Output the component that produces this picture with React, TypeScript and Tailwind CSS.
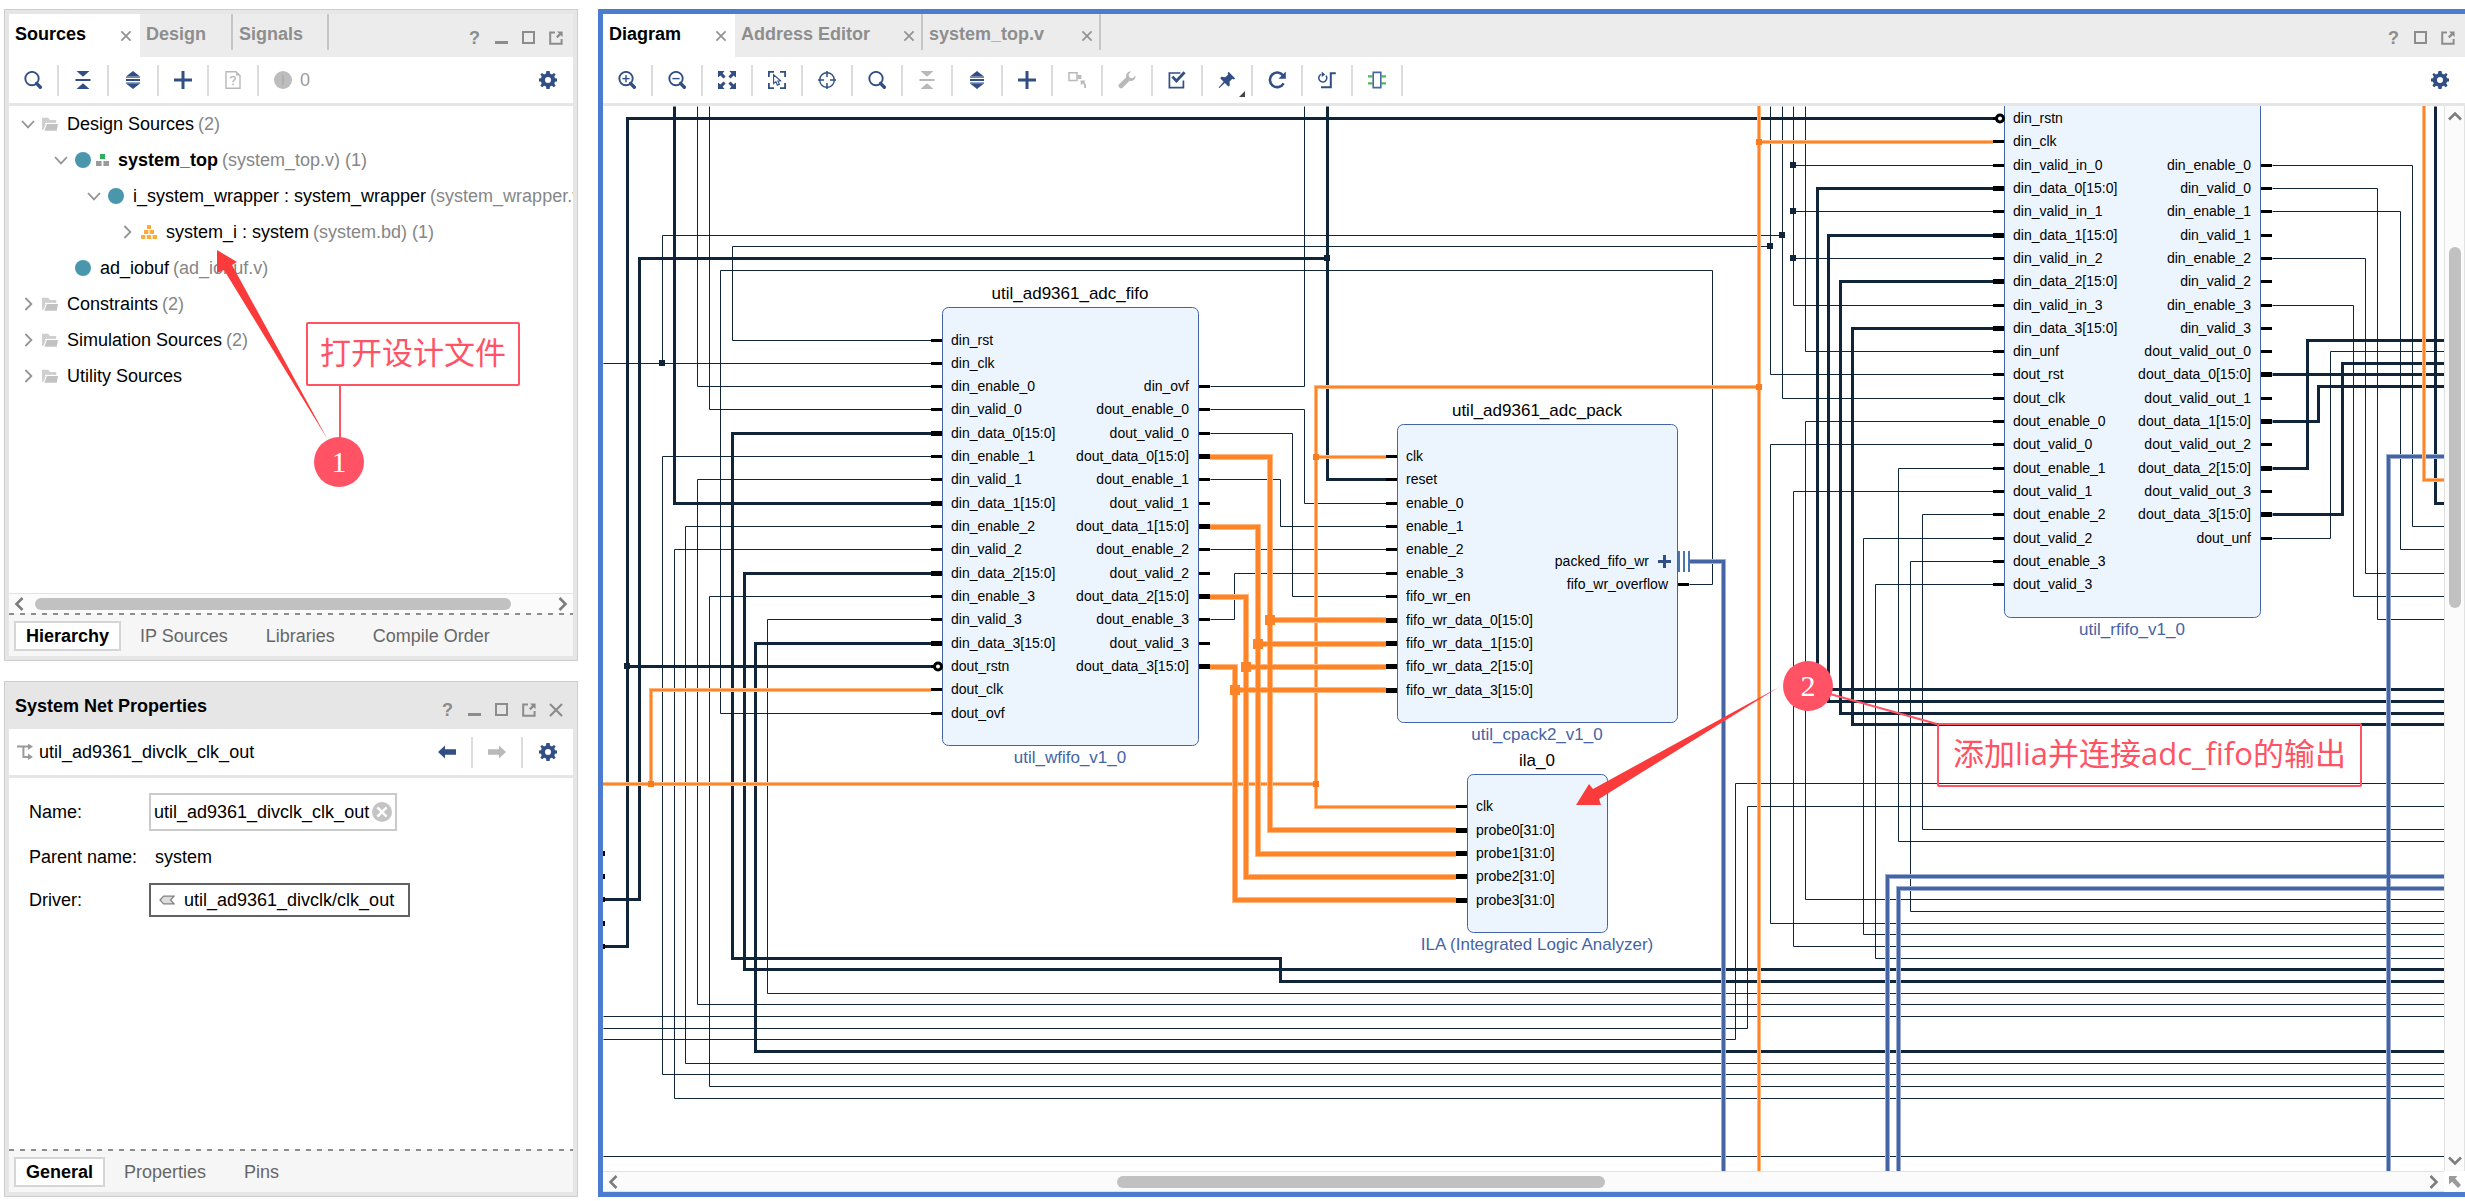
import React from "react"
import clsx from "clsx"

const NAVY = "#324f85"
const WIRE = "#10243a"
const GREY = "#b9b9b9"

/* ---------- icons ---------- */

type IconProps = { children: React.ReactNode; size?: number }

const Icon = ({ children, size = 18 }: IconProps) => (
  <svg width={size} height={size} viewBox="0 0 18 18" fill="none" className="shrink-0" aria-hidden="true">
    {children}
  </svg>
)

const Lens = ({ sign }: { sign?: "plus" | "minus" }) => (
  <Icon>
    <circle cx="8" cy="7.6" r="6.7" stroke={NAVY} strokeWidth="1.9" />
    <path d="M12.6 12.4 L16.3 16.2" stroke={NAVY} strokeWidth="3.4" strokeLinecap="round" />
    {sign && <path d="M4.4 7.6H11.6" stroke={NAVY} strokeWidth="1.4" />}
    {sign === "plus" && <path d="M8 4V11.2" stroke={NAVY} strokeWidth="1.4" />}
  </Icon>
)

const Collapse = ({ color = NAVY }: { color?: string }) => (
  <Icon>
    <path d="M2.5 0H15.5L9 5.8ZM2.5 18H15.5L9 12.2Z" fill={color} />
    <path d="M1.5 9H16.5" stroke={color} strokeWidth="2" />
  </Icon>
)

const Expand = () => (
  <Icon>
    <path d="M2 5.6L9 0L16 5.6ZM2 12.6L9 18L16 12.6Z" fill={NAVY} />
    <path d="M2 9H16" stroke={NAVY} strokeWidth="2" />
    <path d="M2 6.2H16M2 12H16" stroke={NAVY} strokeWidth="1" />
  </Icon>
)

const Plus = () => (
  <Icon>
    <path d="M0 9H18M9 0V18" stroke={NAVY} strokeWidth="3" />
  </Icon>
)

const HelpDoc = () => (
  <Icon>
    <path d="M2 .8H12L16 4.6V17.2H2Z" stroke={GREY} strokeWidth="1.4" />
    <path d="M12 .8V4.6H16Z" fill={GREY} />
    <path d="M6.6 7.4C6.6 5 11.2 5 11.2 7.5C11.2 9.2 9 9.2 9 11.2M9 12.6V14.2" stroke={GREY} strokeWidth="1.5" />
  </Icon>
)

const Gear = () => (
  <Icon>
    <path
      fillRule="evenodd"
      fill={NAVY}
      d="M7.4 0H10.6L11 2.6L13 3.4L15 2L16.6 3.6L15.3 5.6L16 7.2L18 7.6V10.4L16 10.8L15.3 12.4L16.6 14.4L14.9 16.2L12.8 14.8L11 15.5L10.6 18H7.4L7 15.5L5.2 14.8L3.1 16.2L1.4 14.4L2.7 12.4L2 10.8L0 10.4V7.6L2 7.2L2.7 5.6L1.4 3.6L3 2L5 3.4L7 2.6ZM9 6A3 3 0 1 0 9 12A3 3 0 1 0 9 6Z"
    />
  </Icon>
)

const FitAll = () => (
  <Icon>
    <path d="M0 0H6.6L4.6 2.2L7.6 5.4L5.4 7.4L2.4 4.4L0 6.6ZM18 0V6.6L15.6 4.4L12.6 7.4L10.4 5.4L13.4 2.2L11.4 0ZM0 18V11.4L2.4 13.6L5.4 10.6L7.6 12.6L4.6 15.8L6.6 18ZM18 18H11.4L13.4 15.8L10.4 12.6L12.6 10.6L15.6 13.6L18 11.4Z" fill={NAVY} />
  </Icon>
)

const SelectArea = () => (
  <Icon>
    <path d="M.9 6V.9H6M12 .9H17.1V6M17.1 12V17.1H12M6 17.1H.9V12" stroke={NAVY} strokeWidth="1.8" />
    <path d="M5.6 3.8V12.6L7.9 10.7L9.4 14.2L11.4 13.2L9.9 10L12.6 9.8Z" stroke={NAVY} strokeWidth="1.1" />
  </Icon>
)

const Target = () => (
  <Icon>
    <circle cx="9" cy="9" r="7.3" stroke={NAVY} strokeWidth="1.4" />
    <path d="M9 0V6M9 12V18M0 9H6M12 9H18" stroke={NAVY} strokeWidth="1.5" />
  </Icon>
)

const Ungroup = () => (
  <Icon>
    <path d="M1 1.8H9V9.4H1Z" stroke={GREY} strokeWidth="1.5" />
    <path d="M9.6 4H13.4V8H9.6Z" fill={GREY} />
    <path d="M12.4 9.4H17.6L16.2 11L18 14V17H16.2V14L14.8 12.6L13 14Z" fill={GREY} />
  </Icon>
)

const Wrench = () => (
  <Icon>
    <path d="M13 .6C10 .2 7.4 2.8 8.2 6.2L.8 13.4C-.8 15.4 2.4 18.6 4.4 17L11.6 9.8C15 10.6 18 8 17.4 4.6L14.6 7.2L11.4 6.4L10.6 3.4Z" fill={GREY} />
  </Icon>
)

const Validate = () => (
  <Icon>
    <path d="M12.4 2H1.4V16.6H15.4V9.4" stroke={NAVY} strokeWidth="1.7" />
    <path d="M4.4 5.6L8.4 10L16.6 1.2" stroke={NAVY} strokeWidth="2.8" />
  </Icon>
)

const Pin = () => (
  <Icon>
    <path d="M10.6 .8L17.2 7.4L15.6 8.4L14.4 7.8L11.6 10.6L11.8 14.4L10.4 15.6L6.8 12L1.4 17L.6 16.4L5.6 10.8L2.2 7.2L3.4 5.8L7.2 6.2L10.2 3.4L9.6 2.2Z" fill={NAVY} />
  </Icon>
)

const Refresh = () => (
  <Icon>
    <path d="M15 4.4A7.3 7.3 0 1 0 15.6 12.4" stroke={NAVY} strokeWidth="2.6" />
    <path d="M17.8 .6V7.8H10.4Z" fill={NAVY} />
  </Icon>
)

const Regenerate = () => (
  <Icon>
    <path d="M3 3.4A4 4 0 1 0 8 4.6" stroke={NAVY} strokeWidth="1.5" />
    <path d="M3.6 .6L7.2 3.4L3.8 6Z" fill={NAVY} />
    <path d="M17.8 2.2H12.8V16.2H3" stroke={NAVY} strokeWidth="2" />
  </Icon>
)

const Chip = () => (
  <Icon>
    <path d="M0 5.4H4.6M0 12.4H4.6M13.4 5.4H18M13.4 12.4H18" stroke="#4cbb57" strokeWidth="2.4" />
    <path d="M5.2 1.4H12.8V16.6H5.2Z" stroke="#4a669c" strokeWidth="1.6" />
  </Icon>
)

const Arrow = ({ dir, color }: { dir: "left" | "right"; color: string }) => (
  <Icon>
    <path
      d={dir === "left" ? "M0 9L7 2.6V6.2H18V11.8H7V15.4Z" : "M18 9L11 2.6V6.2H0V11.8H11V15.4Z"}
      fill={color}
    />
  </Icon>
)

const Folder = () => (
  <Icon size={16}>
    <path d="M0 2H7L9 4.4H16V8H5L1.6 15.6H0Z" fill="#cfcfcf" />
    <path d="M5.6 9H18L16.6 16.6H2.6Z" fill="#c2c2c2" />
    <path d="M3.4 8.4H14" stroke="#fff" strokeWidth="1.2" />
  </Icon>
)

const Dot = () => <span className="size-4 shrink-0 rounded-full bg-[#4a97ad]" />

const TopMark = () => (
  <svg width="13" height="12" viewBox="0 0 13 12" className="shrink-0" aria-hidden="true">
    <path d="M4 0H9V5H4Z" fill="#2fae5b" />
    <path d="M0 7H5.6V12H0ZM7.4 7H13V12H7.4Z" fill="#9a9a9a" />
  </svg>
)

const BlockDesign = () => (
  <svg width="16" height="14" viewBox="0 0 16 14" className="shrink-0" aria-hidden="true">
    <path d="M6 0H10V4H6ZM3 5H7.4V9H3ZM8.6 5H13V9H8.6ZM0 10H4.4V14H0ZM5.8 10H10.2V14H5.8ZM11.6 10H16V14H11.6Z" fill="#fbac3d" />
  </svg>
)

const Chevron = ({ open }: { open?: boolean }) => (
  <svg width="14" height="14" viewBox="0 0 14 14" fill="none" className="shrink-0" aria-hidden="true">
    <path d={open ? "M1 4L7 10.4L13 4" : "M4.4 1L10.4 7L4.4 13"} stroke="#949494" strokeWidth="1.8" />
  </svg>
)

const ScrollMark = ({ dir }: { dir: "left" | "right" | "up" | "down" }) => {
  const paths = {
    left: "M9.5 1L3.5 7L9.5 13",
    right: "M4.5 1L10.5 7L4.5 13",
    up: "M1 9.5L7 3.5L13 9.5",
    down: "M1 4.5L7 10.5L13 4.5",
  }
  return (
    <svg width="14" height="14" viewBox="0 0 14 14" fill="none" className="shrink-0" aria-hidden="true">
      <path d={paths[dir]} stroke="#7d7d7d" strokeWidth="2.6" />
    </svg>
  )
}

/* ---------- panel chrome ---------- */

type WindowAction = "help" | "min" | "max" | "float" | "close"

const WindowButtons = ({ actions }: { actions: WindowAction[] }) => (
  <div className="ml-auto flex items-center pr-1 pt-1">
    {actions.map((action) => (
      <button key={action} aria-label={action} className="flex h-5 w-[27px] items-center justify-center text-[#8c8c8c]">
        {action === "help" && <span className="text-lg leading-5 font-bold">?</span>}
        {action === "min" && <span className="mt-2.5 h-[3px] w-[13px] bg-[#8c8c8c]" />}
        {action === "max" && <span className="size-[13px] border-2 border-[#8c8c8c]" />}
        {action === "float" && (
          <svg width="14" height="14" viewBox="0 0 14 14" fill="none" aria-hidden="true">
            <path d="M6 1.4H1.2V12.8H12.6V8" stroke="#8c8c8c" strokeWidth="2" />
            <path d="M8 .4H13.6V6L11.6 4.2L8.6 7.2L7 5.6L10 2.6Z" fill="#8c8c8c" />
          </svg>
        )}
        {action === "close" && (
          <svg width="14" height="14" viewBox="0 0 14 14" fill="none" aria-hidden="true">
            <path d="M1 1L13 13M13 1L1 13" stroke="#8c8c8c" strokeWidth="2.2" />
          </svg>
        )}
      </button>
    ))}
  </div>
)

type TabProps = { label: string; width: string; active?: boolean; closable?: boolean }

const Tab = ({ label, width, active, closable }: TabProps) => (
  <div className={clsx("flex h-full items-center pl-1.5", width, active ? "bg-white" : "bg-[#ececec]")}>
    <button className={clsx("pb-1 text-lg leading-6 font-bold", active ? "text-black" : "text-[#8e8e8e]")}>{label}</button>
    {closable && (
      <button aria-label={`Close ${label}`} className={clsx("ml-auto", active ? "mr-2" : "mr-1.5")}>
        <svg width="12" height="12" viewBox="0 0 12 12" fill="none" aria-hidden="true">
          <path d="M1.4 1.4L10.6 10.6M10.6 1.4L1.4 10.6" stroke="#929292" strokeWidth="1.7" />
        </svg>
      </button>
    )}
    {!active && <span className={clsx("h-9 w-0.5 self-start bg-[#c6c6c6]", !closable && "ml-auto")} />}
  </div>
)

type Tool = { name: string; icon: React.ReactNode; menu?: boolean }

const ToolButton = ({ name, icon, menu, last }: Tool & { last?: boolean }) => (
  <button
    aria-label={name}
    className={clsx("relative flex h-[31px] w-[50px] items-center justify-center", !last && "border-r-2 border-[#dcdcdc]")}
  >
    {icon}
    {menu && (
      <svg width="6" height="6" viewBox="0 0 6 6" className="absolute right-1.5 -bottom-px" aria-hidden="true">
        <path d="M6 0V6H0Z" fill="#444" />
      </svg>
    )}
  </button>
)

const FooterTabs = ({ tabs }: { tabs: string[] }) => (
  <div className="shrink-0 bg-[#f6f6f6]">
    <div className="h-0.5 bg-[repeating-linear-gradient(90deg,#8d8d8d_0_5px,transparent_5px_11px)]" />
    <div className="flex h-[41px] items-center pl-[5px]">
      {tabs.map((tab, i) => (
        <button
          key={tab}
          className={clsx(
            "text-lg leading-6",
            i === 0 ? "border-2 border-[#d6d6d6] bg-white px-2.5 py-px font-bold text-black" : "px-[19px] text-[#666]"
          )}
        >
          {tab}
        </button>
      ))}
    </div>
  </div>
)

/* ---------- left column ---------- */

type TreeRow = {
  pad: string
  open?: boolean
  leaf?: boolean
  icons: React.ReactNode
  label: string
  bold?: boolean
  note?: string
}

const tree: TreeRow[] = [
  { pad: "pl-3", open: true, icons: <Folder />, label: "Design Sources", note: "(2)" },
  { pad: "pl-[45px]", open: true, icons: <><Dot /><TopMark /></>, label: "system_top", bold: true, note: "(system_top.v) (1)" },
  { pad: "pl-[78px]", open: true, icons: <Dot />, label: "i_system_wrapper : system_wrapper", note: "(system_wrapper.v" },
  { pad: "pl-[111px]", icons: <BlockDesign />, label: "system_i : system", note: "(system.bd) (1)" },
  { pad: "pl-[45px]", leaf: true, icons: <Dot />, label: "ad_iobuf", note: "(ad_iobuf.v)" },
  { pad: "pl-3", icons: <Folder />, label: "Constraints", note: "(2)" },
  { pad: "pl-3", icons: <Folder />, label: "Simulation Sources", note: "(2)" },
  { pad: "pl-3", icons: <Folder />, label: "Utility Sources" },
]

const SourcesPanel = () => (
  <section className="flex h-[652px] flex-col overflow-hidden border border-[#cdcdcd] bg-[#e6e6e6] p-1">
    <div className="flex h-[43px] shrink-0 bg-[#ececec]">
      <Tab label="Sources" width="w-[131px]" active closable />
      <Tab label="Design" width="w-[93px]" />
      <Tab label="Signals" width="w-24" />
      <WindowButtons actions={["help", "min", "max", "float"]} />
    </div>
    <div className="flex h-[49px] shrink-0 items-center border-b-[3px] border-[#e6e6e6] bg-white">
      <ToolButton name="Search" icon={<Lens />} />
      <ToolButton name="Collapse all" icon={<Collapse />} />
      <ToolButton name="Expand all" icon={<Expand />} />
      <ToolButton name="Add sources" icon={<Plus />} />
      <ToolButton name="Show missing" icon={<HelpDoc />} />
      <button className="flex items-center gap-2 pl-[15px] text-lg leading-6 text-[#9b9b9b]">
        <span className="flex size-[18px] items-center justify-center rounded-full bg-[#bdbdbd]">
          <span className="h-2.5 w-0.5 bg-[#b0b0b0]" />
        </span>
        0
      </button>
      <div className="ml-auto">
        <ToolButton name="Settings" icon={<Gear />} last />
      </div>
    </div>
    <ul className="min-h-0 flex-1 overflow-hidden bg-white">
      {tree.map((row) => (
        <li key={row.label} className={clsx("flex h-9 items-center whitespace-nowrap text-lg leading-6", row.pad)}>
          {row.leaf ? <span className="w-3.5 shrink-0" /> : <Chevron open={row.open} />}
          <span className="ml-[7px] flex items-center gap-[5px]">{row.icons}</span>
          <span className={clsx("ml-[9px]", row.bold && "font-bold")}>{row.label}</span>
          {row.note && <span className="ml-1 text-[#868686]">{row.note}</span>}
        </li>
      ))}
    </ul>
    <div className="flex h-5 shrink-0 items-center gap-2 border-t border-[#e2e2e2] bg-[#fbfbfb] px-1">
      <ScrollMark dir="left" />
      <div className="flex flex-1">
        <div className="h-3 w-[93%] rounded-full bg-[#c1c1c1]" />
      </div>
      <ScrollMark dir="right" />
    </div>
    <FooterTabs tabs={["Hierarchy", "IP Sources", "Libraries", "Compile Order"]} />
  </section>
)

const PropertiesPanel = () => (
  <section className="flex min-h-0 flex-1 flex-col border border-[#cdcdcd] bg-[#e6e6e6] p-1">
    <div className="flex h-[43px] shrink-0 items-center pl-1.5">
      <h2 className="pb-1 text-lg leading-6 font-bold">System Net Properties</h2>
      <WindowButtons actions={["help", "min", "max", "float", "close"]} />
    </div>
    <div className="flex h-[49px] shrink-0 items-center border-b-[3px] border-[#e6e6e6] bg-white pl-2">
      <svg width="16" height="16" viewBox="0 0 16 16" fill="none" className="shrink-0" aria-hidden="true">
        <path d="M0 2.6H12M6.4 2.6V13H12" stroke="#9a9a9a" strokeWidth="2" />
        <path d="M11 -.4L16 2.6L11 6ZM11 9.6L16 13L11 16Z" fill="#9a9a9a" />
      </svg>
      <span className="ml-1.5 text-lg leading-6">util_ad9361_divclk_clk_out</span>
      <div className="ml-auto flex">
        <ToolButton name="Back" icon={<Arrow dir="left" color={NAVY} />} />
        <ToolButton name="Forward" icon={<Arrow dir="right" color={GREY} />} />
        <ToolButton name="Settings" icon={<Gear />} last />
      </div>
    </div>
    <div className="min-h-0 flex-1 bg-white pt-[15px] pl-5 text-lg leading-6">
      <div className="grid grid-cols-[120px_1fr] items-center gap-y-2">
        <label htmlFor="net-name">Name:</label>
        <div className="flex h-[38px] w-[248px] items-center border-2 border-[#cacaca] pl-[3px]">
          <input id="net-name" className="w-[218px] outline-none" defaultValue="util_ad9361_divclk_clk_out" />
          <button aria-label="Clear name">
            <svg width="20" height="20" viewBox="0 0 20 20" fill="none" aria-hidden="true">
              <circle cx="10" cy="10" r="10" fill="#c4c4c4" />
              <path d="M5.4 5.4L14.6 14.6M14.6 5.4L5.4 14.6" stroke="#fff" strokeWidth="2.4" />
            </svg>
          </button>
        </div>
        <span>Parent name:</span>
        <span className="flex h-9 items-center pl-1.5">system</span>
        <span>Driver:</span>
        <button className="flex h-[34px] w-[261px] items-center gap-[9px] border-2 border-[#626262] pl-2">
          <svg width="16" height="10" viewBox="0 0 16 10" fill="none" aria-hidden="true">
            <path d="M1 5L4.6 1.2H15L11.6 5L15 8.8H4.6Z" fill="#ddd" stroke="#808080" strokeWidth="1.2" />
          </svg>
          util_ad9361_divclk/clk_out
        </button>
      </div>
    </div>
    <FooterTabs tabs={["General", "Properties", "Pins"]} />
  </section>
)

/* ---------- block diagram ---------- */

// wires are kept in sheet coordinates, the view is scrolled by this much
const SCROLL_X = 603
const SCROLL_Y = 106
const EDGE = 2480
const BOTTOM = 1200

const thinWires = [
  "M697 106V386H931",
  "M709 106V409H931",
  "M662 363V235H1782",
  "M603 363H931",
  "M662 1074V456H931",
  `M662 1074H${EDGE}`,
  "M931 340H732V246H1770",
  "M931 713H720V270H1712V584H1689",
  `M931 479H697V1004H${EDGE}`,
  `M931 526H685V1063H${EDGE}`,
  `M931 549H674V1098H${EDGE}`,
  `M931 596H709V1086H${EDGE}`,
  `M931 619H767V993H${EDGE}`,
  `M603 1016H${EDGE}`,
  `M603 1028H1747V806H${EDGE}`,
  `M603 1039H1735V783H${EDGE}`,
  `M603 1156H${EDGE}`,
  "M1304 106V386H1210",
  "M1210 409H1304V503H1386",
  "M1210 433H1292V596H1386",
  "M1210 479H1280V526H1386",
  "M1210 549H1386",
  "M1210 619H1234V573H1386",
  "M1770 106V374H1993",
  "M1782 106V398H1993",
  "M1793 106V305H1993",
  "M1793 165H1993",
  "M1793 211H1993",
  "M1793 258H1993",
  "M1805 106V351H1993",
  `M1993 421H1805V899H${EDGE}`,
  `M1993 444H1770V923H${EDGE}`,
  `M1993 468H1898V841H${EDGE}`,
  `M1993 491H1793V946H${EDGE}`,
  `M1993 514H1922V829H${EDGE}`,
  `M1993 538H1863V934H${EDGE}`,
  `M1993 561H1910V911H${EDGE}`,
  `M1993 584H1875V958H${EDGE}`,
  `M2272 165H2412V526H${EDGE}`,
  `M2272 188H2377V619H${EDGE}`,
  `M2272 211H2400V549H${EDGE}`,
  `M2272 258H2365V573H${EDGE}`,
  `M2272 305H2353V596H${EDGE}`,
  `M2272 538H2330V351H${EDGE}`,
]

const busWires = [
  "M603 946H627V118H1993",
  "M627 666H931",
  "M603 899H639V258H1327",
  "M674 106V503H931",
  "M1327 106V479H1386",
  `M931 433H732V958H1280V981H${EDGE}`,
  `M931 573H744V969H${EDGE}`,
  `M931 643H755V1051H${EDGE}`,
  `M1993 188H1817V689H${EDGE}`,
  `M1993 235H1828V701H${EDGE}`,
  `M1993 281H1840V713H${EDGE}`,
  `M1993 328H1852V724H${EDGE}`,
  `M2272 374H${EDGE}`,
  `M2272 421H2318V386H${EDGE}`,
  `M2272 468H2307V340H${EDGE}`,
  `M2272 514H2342V363H${EDGE}`,
  `M2435 106V503H${EDGE}`,
]

const blueWires = [
  `M1689 561H1723V${BOTTOM}`,
  `M${EDGE} 876H1887V${BOTTOM}`,
  `M${EDGE} 888H1898V${BOTTOM}`,
  `M${EDGE} 456H2388V${BOTTOM}`,
]

const clockWires = [
  "M931 690H651V784",
  "M603 784H1316",
  "M1759 387H1316V807H1456",
  "M1316 457H1386",
  `M1759 106V${BOTTOM}`,
  "M1759 142H1993",
  `M2424 106V480H${EDGE}`,
]

const probeWires = [
  "M1210 457H1270V830H1456",
  "M1270 620H1386",
  "M1210 527H1258V854H1456",
  "M1258 644H1386",
  "M1210 597H1246V877H1456",
  "M1246 667H1386",
  "M1210 667H1235V900H1456",
  "M1235 690H1386",
]

// [x, y, half size, colour]
const junctions: [number, number, number, string][] = [
  [662, 363, 3, WIRE], [627, 666, 3, WIRE], [1327, 258, 3, WIRE],
  [1782, 235, 3, WIRE], [1770, 246, 3, WIRE],
  [1793, 165, 3, WIRE], [1793, 211, 3, WIRE], [1793, 258, 3, WIRE],
  [651, 784, 3, "#f97b1c"], [1316, 784, 3, "#f97b1c"], [1316, 457, 3, "#f97b1c"],
  [1759, 387, 3, "#f97b1c"], [1759, 142, 3, "#f97b1c"],
  [1270, 620, 5, "#ff8427"], [1258, 644, 5, "#ff8427"], [1246, 667, 5, "#ff8427"], [1235, 690, 5, "#ff8427"],
]

type Port = [name: string, y: number, kind?: "bus" | "inv" | "if"]

type Block = {
  title?: string
  type: string
  x: number
  y: number
  w: number
  h: number
  left: Port[]
  right: Port[]
}

const blocks: Block[] = [
  {
    title: "util_ad9361_adc_fifo", type: "util_wfifo_v1_0", x: 942, y: 307, w: 256, h: 438,
    left: [
      ["din_rst", 340], ["din_clk", 363], ["din_enable_0", 386], ["din_valid_0", 409], ["din_data_0[15:0]", 433, "bus"],
      ["din_enable_1", 456], ["din_valid_1", 479], ["din_data_1[15:0]", 503, "bus"], ["din_enable_2", 526],
      ["din_valid_2", 549], ["din_data_2[15:0]", 573, "bus"], ["din_enable_3", 596], ["din_valid_3", 619],
      ["din_data_3[15:0]", 643, "bus"], ["dout_rstn", 666, "inv"], ["dout_clk", 689], ["dout_ovf", 713],
    ],
    right: [
      ["din_ovf", 386], ["dout_enable_0", 409], ["dout_valid_0", 433], ["dout_data_0[15:0]", 456, "bus"],
      ["dout_enable_1", 479], ["dout_valid_1", 503], ["dout_data_1[15:0]", 526, "bus"], ["dout_enable_2", 549],
      ["dout_valid_2", 573], ["dout_data_2[15:0]", 596, "bus"], ["dout_enable_3", 619], ["dout_valid_3", 643],
      ["dout_data_3[15:0]", 666, "bus"],
    ],
  },
  {
    title: "util_ad9361_adc_pack", type: "util_cpack2_v1_0", x: 1397, y: 424, w: 280, h: 298,
    left: [
      ["clk", 456], ["reset", 479], ["enable_0", 503], ["enable_1", 526], ["enable_2", 549], ["enable_3", 573],
      ["fifo_wr_en", 596], ["fifo_wr_data_0[15:0]", 620, "bus"], ["fifo_wr_data_1[15:0]", 643, "bus"],
      ["fifo_wr_data_2[15:0]", 666, "bus"], ["fifo_wr_data_3[15:0]", 690, "bus"],
    ],
    right: [["packed_fifo_wr", 561, "if"], ["fifo_wr_overflow", 584]],
  },
  {
    title: "ila_0", type: "ILA (Integrated Logic Analyzer)", x: 1467, y: 774, w: 140, h: 158,
    left: [
      ["clk", 806], ["probe0[31:0]", 830, "bus"], ["probe1[31:0]", 853, "bus"], ["probe2[31:0]", 876, "bus"],
      ["probe3[31:0]", 900, "bus"],
    ],
    right: [],
  },
  {
    type: "util_rfifo_v1_0", x: 2004, y: 60, w: 256, h: 557,
    left: [
      ["din_rstn", 118, "inv"], ["din_clk", 141], ["din_valid_in_0", 165], ["din_data_0[15:0]", 188, "bus"],
      ["din_valid_in_1", 211], ["din_data_1[15:0]", 235, "bus"], ["din_valid_in_2", 258], ["din_data_2[15:0]", 281, "bus"],
      ["din_valid_in_3", 305], ["din_data_3[15:0]", 328, "bus"], ["din_unf", 351], ["dout_rst", 374], ["dout_clk", 398],
      ["dout_enable_0", 421], ["dout_valid_0", 444], ["dout_enable_1", 468], ["dout_valid_1", 491], ["dout_enable_2", 514],
      ["dout_valid_2", 538], ["dout_enable_3", 561], ["dout_valid_3", 584],
    ],
    right: [
      ["din_enable_0", 165], ["din_valid_0", 188], ["din_enable_1", 211], ["din_valid_1", 235], ["din_enable_2", 258],
      ["din_valid_2", 281], ["din_enable_3", 305], ["din_valid_3", 328], ["dout_valid_out_0", 351],
      ["dout_data_0[15:0]", 374, "bus"], ["dout_valid_out_1", 398], ["dout_data_1[15:0]", 421, "bus"],
      ["dout_valid_out_2", 444], ["dout_data_2[15:0]", 468, "bus"], ["dout_valid_out_3", 491],
      ["dout_data_3[15:0]", 514, "bus"], ["dout_unf", 538],
    ],
  },
]

const Wires = ({ paths, color, width, glow, glowWidth }: { paths: string[]; color: string; width: number; glow?: string; glowWidth?: number }) => (
  // odd widths are shifted half a unit so that they fill whole pixels
  <g fill="none" strokeLinecap="butt" transform={width % 2 ? "translate(0.5 0.5)" : undefined}>
    {glow && <path d={paths.join("")} stroke={glow} strokeWidth={glowWidth} />}
    <path d={paths.join("")} stroke={color} strokeWidth={width} />
  </g>
)

const BlockNode = ({ block }: { block: Block }) => {
  const { x, y, w, h } = block
  const mid = x + w / 2
  return (
    <g>
      <rect x={x + 0.5} y={y + 0.5} width={w} height={h} rx="6" fill="#ecf5fe" stroke="#4464a5" />
      {block.title && (
        <text x={mid} y={y - 8} textAnchor="middle" fontSize="17">{block.title}</text>
      )}
      <text x={mid} y={y + h + 18} textAnchor="middle" fontSize="17" fill="#4464a5">{block.type}</text>
      {block.left.map(([name, py, kind]) => (
        <g key={name}>
          <rect x={x - 11} y={kind === "bus" ? py - 2 : py - 1} width={kind === "inv" ? 4 : 11} height={kind === "bus" ? 5 : 3} />
          {kind === "inv" && <circle cx={x - 4} cy={py + 0.5} r="3.5" fill="#fff" stroke="#000" strokeWidth="3" />}
          <text x={x + 9} y={py + 5} fontSize="14">{name}</text>
        </g>
      ))}
      {block.right.map(([name, py, kind]) =>
        kind === "if" ? (
          <g key={name}>
            <text x={x + w - 28} y={py + 5} textAnchor="end" fontSize="14">{name}</text>
            <path d={`M${x + w - 19} ${py + 0.5}h13m-6.5 -6.5v13`} stroke={NAVY} strokeWidth="3" />
            <path d={`M${x + w + 2} ${py - 10}v21m5 -21v21m5 -21v21`} stroke="#4a76ac" strokeWidth="2" />
          </g>
        ) : (
          <g key={name}>
            <rect x={x + w + 1} y={kind === "bus" ? py - 2 : py - 1} width="11" height={kind === "bus" ? 5 : 3} />
            <text x={x + w - 9} y={py + 5} textAnchor="end" fontSize="14">{name}</text>
          </g>
        )
      )}
    </g>
  )
}

const DiagramCanvas = () => (
  <svg className="block size-full" fontFamily='"Liberation Sans", Arial, sans-serif' role="img" aria-label="Block diagram">
    <g transform={`translate(${-SCROLL_X} ${-SCROLL_Y})`}>
      <Wires paths={thinWires} color={WIRE} width={1} />
      <Wires paths={busWires} color={WIRE} width={3} />
      <Wires paths={blueWires} color="#4464a5" width={3} glow="#9dafd2" glowWidth={5} />
      <Wires paths={clockWires} color="#ff8427" width={2} glow="#ffb87f" glowWidth={4} />
      <Wires paths={probeWires} color="#ff8427" width={4} glow="#ffb87f" glowWidth={6} />
      {junctions.map(([jx, jy, r, color]) => (
        <rect key={`${jx}-${jy}`} x={jx - r} y={jy - r} width={r * 2} height={r * 2} fill={color} />
      ))}
      {[853, 876, 899, 923, 946].map((py) => (
        <rect key={py} x="603" y={py - 2} width="2" height="5" />
      ))}
      {blocks.map((block) => (
        <BlockNode key={block.type} block={block} />
      ))}
    </g>
  </svg>
)

const diagramTools: Tool[] = [
  { name: "Zoom in", icon: <Lens sign="plus" /> },
  { name: "Zoom out", icon: <Lens sign="minus" /> },
  { name: "Zoom fit", icon: <FitAll /> },
  { name: "Select area", icon: <SelectArea /> },
  { name: "Center", icon: <Target /> },
  { name: "Search", icon: <Lens /> },
  { name: "Collapse all", icon: <Collapse color={GREY} /> },
  { name: "Expand all", icon: <Expand /> },
  { name: "Add IP", icon: <Plus /> },
  { name: "Ungroup", icon: <Ungroup /> },
  { name: "Customize block", icon: <Wrench /> },
  { name: "Validate design", icon: <Validate /> },
  { name: "Pin", icon: <Pin />, menu: true },
  { name: "Refresh", icon: <Refresh /> },
  { name: "Regenerate layout", icon: <Regenerate /> },
  { name: "Default view", icon: <Chip /> },
]

const DiagramPanel = () => (
  <section className="flex min-w-0 flex-1 flex-col border-y-[5px] border-l-[5px] border-[#4b7ccf] bg-white">
    <div className="flex h-[43px] shrink-0 bg-[#ececec]">
      <Tab label="Diagram" width="w-[132px]" active closable />
      <Tab label="Address Editor" width="w-[188px]" closable />
      <Tab label="system_top.v" width="w-[178px]" closable />
      <WindowButtons actions={["help", "max", "float"]} />
    </div>
    <div className="flex h-[49px] shrink-0 items-center border-b-[3px] border-[#e6e6e6]">
      {diagramTools.map((tool) => (
        <ToolButton key={tool.name} {...tool} />
      ))}
      <div className="ml-auto">
        <ToolButton name="Settings" icon={<Gear />} last />
      </div>
    </div>
    <div className="grid min-h-0 flex-1 grid-cols-[minmax(0,1fr)_21px] grid-rows-[minmax(0,1fr)_21px]">
      <div className="min-h-0 overflow-hidden">
        <DiagramCanvas />
      </div>
      <div className="flex flex-col items-center border-x border-[#e2e2e2] bg-[#fbfbfb] py-1">
        <ScrollMark dir="up" />
        <div className="flex w-full flex-1 flex-col items-center">
          <div className="h-[12%]" />
          <div className="h-[35%] w-3 rounded-full bg-[#c1c1c1]" />
        </div>
        <ScrollMark dir="down" />
      </div>
      <div className="flex items-center border-y border-[#e2e2e2] bg-[#fbfbfb] px-1">
        <ScrollMark dir="left" />
        <div className="grid flex-1 grid-cols-[55fr_54fr_91fr]">
          <div className="col-start-2 h-3 rounded-full bg-[#c1c1c1]" />
        </div>
        <ScrollMark dir="right" />
      </div>
      <div className="flex items-center justify-center">
        <svg width="12" height="12" viewBox="0 0 12 12" aria-hidden="true">
          <path d="M0 0H8.4L6.2 2.4L12 9L9 12L3 5.8L0 8.4Z" fill="#9a9a9a" />
        </svg>
      </div>
    </div>
  </section>
)

/* ---------- review notes drawn over the window ---------- */

const noteBox =
  "absolute flex h-16 items-center justify-center rounded-xs border-2 border-[#ff5264] pb-1 text-[31px] leading-10 whitespace-nowrap text-[#ff5264] [font-family:'Open_Sans','Noto_Sans_CJK_SC',sans-serif]"

const noteDot =
  "absolute flex size-[50px] items-center justify-center rounded-full bg-[#ff5264] text-3xl leading-9 text-white [font-family:'Liberation_Serif',serif]"

const Notes = () => (
  <div className="pointer-events-none absolute inset-0 overflow-hidden">
    <svg className="absolute inset-0 size-full" aria-hidden="true">
      <path d="M217 250L237 262L232 265L328 440L224 270L217 273Z" fill="#fb3b3b" />
      <path d="M1576 805L1589 784L1593 789L1779 687L1599 799L1601 805Z" fill="#fb3b3b" />
      <path d="M340 385V440M1830 694L1937 724" stroke="#ff5264" strokeWidth="2" />
    </svg>
    <span className={clsx(noteDot, "top-[437px] left-[314px]")}>1</span>
    <span className={clsx(noteDot, "top-[661px] left-[1783px]")}>2</span>
    <div className={clsx(noteBox, "top-[322px] left-[306px] w-[214px]")}>打开设计文件</div>
    <div className={clsx(noteBox, "top-[723px] left-[1937px] w-[425px]")}>添加lia并连接adc_fifo的输出</div>
  </div>
)

export default function App() {
  return (
    <main className="relative flex h-screen gap-5 overflow-hidden bg-white pt-[9px] pb-1 pl-1 font-['Liberation_Sans',Arial,sans-serif] text-black">
      <div className="flex w-[574px] shrink-0 flex-col gap-5">
        <SourcesPanel />
        <PropertiesPanel />
      </div>
      <DiagramPanel />
      <Notes />
    </main>
  )
}
